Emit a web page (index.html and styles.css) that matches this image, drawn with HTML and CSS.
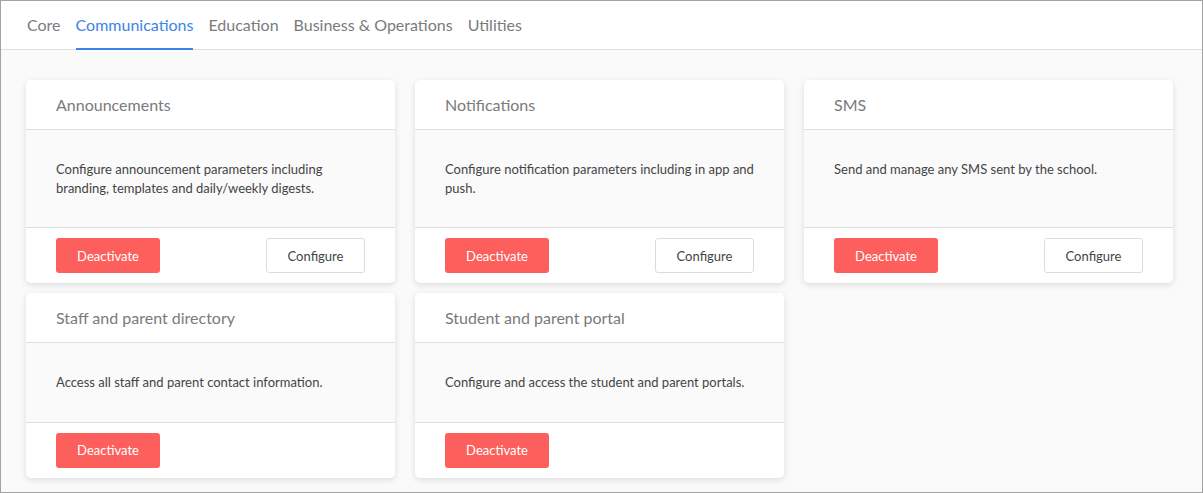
FILE: index.html
```html
<!DOCTYPE html>
<html>
<head>
<meta charset="utf-8">
<link rel="stylesheet" href="styles.css">
</head>
<body>
<div class="frame">
  <nav class="tabs">
    <a class="tab">Core</a>
    <a class="tab active">Communications</a>
    <a class="tab">Education</a>
    <a class="tab">Business &amp; Operations</a>
    <a class="tab">Utilities</a>
  </nav>
  <main class="grid">
    <section class="card">
      <header class="card-head">Announcements</header>
      <div class="card-body">Configure announcement parameters including branding, templates and daily/weekly digests.</div>
      <footer class="card-foot"><button class="btn danger">Deactivate</button><button class="btn plain">Configure</button></footer>
    </section>
    <section class="card">
      <header class="card-head">Notifications</header>
      <div class="card-body">Configure notification parameters including in app and push.</div>
      <footer class="card-foot"><button class="btn danger">Deactivate</button><button class="btn plain">Configure</button></footer>
    </section>
    <section class="card">
      <header class="card-head">SMS</header>
      <div class="card-body">Send and manage any SMS sent by the school.</div>
      <footer class="card-foot"><button class="btn danger">Deactivate</button><button class="btn plain">Configure</button></footer>
    </section>
    <section class="card">
      <header class="card-head">Staff and parent directory</header>
      <div class="card-body">Access all staff and parent contact information.</div>
      <footer class="card-foot"><button class="btn danger">Deactivate</button></footer>
    </section>
    <section class="card">
      <header class="card-head">Student and parent portal</header>
      <div class="card-body">Configure and access the student and parent portals.</div>
      <footer class="card-foot"><button class="btn danger">Deactivate</button></footer>
    </section>
  </main>
</div>
</body>
</html>
```
FILE: styles.css
```css
html, body {
  margin: 0;
  padding: 0;
}
body {
  font-family: Lato, "Open Sans", sans-serif;
  background: #fff;
}
.frame {
  width: 1203px;
  height: 493px;
  box-sizing: border-box;
  border: 1px solid #a3a3a3;
  background: #fafafa;
  overflow: hidden;
}
.tabs {
  display: flex;
  gap: 15px;
  height: 49px;
  box-sizing: border-box;
  padding-left: 26px;
  background: #fff;
  border-bottom: 1px solid #dedede;
}
.tab {
  display: flex;
  align-items: center;
  font-size: 16px;
  color: #7b7b7b;
  border-bottom: 2px solid transparent;
  margin-bottom: -1px;
}
.tab.active {
  color: #3d84e6;
  border-bottom-color: #3d84e6;
}
.grid {
  display: grid;
  grid-template-columns: repeat(3, 369px);
  column-gap: 20px;
  row-gap: 10px;
  padding: 30px 0 0 25px;
  align-items: stretch;
}
.card {
  display: flex;
  flex-direction: column;
  background: #fff;
  border-radius: 5px;
  box-shadow: 0 2px 6px rgba(0, 0, 0, 0.12);
  overflow: hidden;
}
.card-head {
  height: 50px;
  box-sizing: border-box;
  padding: 0 30px;
  display: flex;
  align-items: center;
  font-size: 16px;
  color: #7a7a7a;
  border-bottom: 1px solid #dedede;
}
.card-body {
  flex: 1;
  background: #fafafa;
  padding: 30px;
  font-size: 13px;
  line-height: 18.5px;
  color: #444;
  border-bottom: 1px solid #dedede;
}
.card-foot {
  display: flex;
  justify-content: space-between;
  align-items: center;
  padding: 10px 30px;
}
.btn {
  font-family: Lato, "Open Sans", sans-serif;
  font-size: 13px;
  height: 35px;
  border-radius: 3px;
  cursor: pointer;
}
.btn.danger {
  width: 104px;
  background: #fd5f5c;
  color: #fff;
  border: none;
}
.btn.plain {
  width: 99px;
  background: #fff;
  color: #444;
  border: 1px solid #dcdcdc;
}
```
